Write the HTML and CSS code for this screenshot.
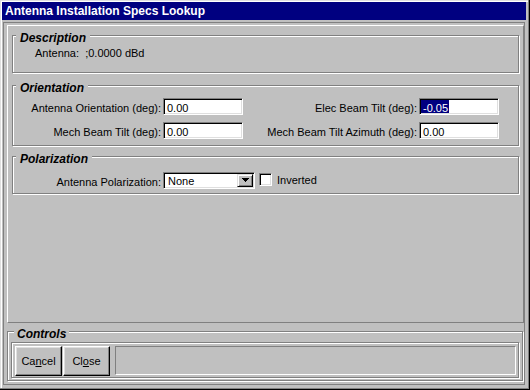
FILE: index.html
```html
<!DOCTYPE html>
<html lang="en">
<head>
  <meta charset="UTF-8" />
  <title>Antenna Installation Specs Lookup</title>
  <link rel="stylesheet" href="styles.css">
</head>
<body>
  <div class="window">
    <div class="titlebar">Antenna Installation Specs Lookup</div>
    <div class="client">
      <!-- Panel principal con los grupos -->
      <div class="main-panel">
        <fieldset class="group group-desc">
          <legend>Description</legend>
          <div class="desc">Antenna:  ;0.0000 dBd</div>
        </fieldset>

        <fieldset class="group group-orient">
          <legend>Orientation</legend>
          <div class="orient-grid">
            <span class="lbl">Antenna Orientation (deg):</span>
            <div class="edit"><span class="val">0.00</span></div>
            <span class="lbl">Elec Beam Tilt (deg):</span>
            <div class="edit"><span class="val selected">-0.05</span></div>
            <span class="lbl">Mech Beam Tilt (deg):</span>
            <div class="edit"><span class="val">0.00</span></div>
            <span class="lbl">Mech Beam Tilt Azimuth (deg):</span>
            <div class="edit"><span class="val">0.00</span></div>
          </div>
        </fieldset>

        <fieldset class="group group-pol">
          <legend>Polarization</legend>
          <div class="pol-row">
            <span class="lbl">Antenna Polarization:</span>
            <div class="edit combo">
              <span class="val">None</span>
              <span class="combo-btn">
                <svg width="7" height="4" viewBox="0 0 7 4"><path d="M0 0h7v1h-1v1h-1v1h-1v1h-1v-1h-1v-1h-1v-1h-1z" fill="#000"/></svg>
              </span>
            </div>
            <span class="check"></span>
            <span class="check-label">Inverted</span>
          </div>
        </fieldset>
      </div>

      <!-- Controles inferiores -->
      <fieldset class="group controls">
        <legend>Controls</legend>
        <div class="button-bar">
          <button class="btn">Ca<u>n</u>cel</button>
          <button class="btn">Cl<u>o</u>se</button>
          <div class="status"></div>
        </div>
      </fieldset>
    </div>
  </div>
</body>
</html>
```

FILE: styles.css
```css
/* Reset básico */
* {
  margin: 0;
  padding: 0;
  box-sizing: border-box;
}
body {
  background: #c0c0c0;
  font-family: "Liberation Sans", Arial, sans-serif;
  font-size: 11px;
  color: #000;
}
/* Ventana con borde estilo Win95 */
.window {
  width: 530px;
  height: 390px;
  padding: 2px 4px 4px 2px;
  display: flex;
  flex-direction: column;
  background: #c0c0c0;
  box-shadow: inset -1px -1px #000, inset -2px -2px #808080, inset 1px 1px #dfdfdf, inset 2px 2px #fff;
}
.titlebar {
  flex: none;
  height: 18px;
  line-height: 18px;
  padding-left: 3px;
  background: #000080;
  color: #fff;
  font-weight: bold;
  font-size: 12px;
  white-space: nowrap;
}
.client {
  flex: 1;
  margin: 2px 1px 1px 1px;
  border: 1px solid #808080;
  padding: 2px 0 2px 3px;
  display: flex;
  flex-direction: column;
}
.main-panel {
  flex: 1;
  border: 1px solid;
  border-color: #fff #808080 #808080 #fff;
  padding: 0 4px;
}
/* Group boxes grabados */
.group {
  border: 1px solid #808080;
  box-shadow: 1px 1px 0 #fff, inset 1px 1px 0 #fff;
  min-width: 0;
}
.group legend {
  font: italic bold 12px/12px "Liberation Sans", Arial, sans-serif;
  padding: 6px 4px 0 4px;
  margin-left: 3px;
  background: #c0c0c0;
}
.group-orient {
  margin-top: 3px;
}
.group-pol {
  margin-top: 1px;
}
.desc {
  padding: 2px 0 12px 22px;
  line-height: 14px;
  white-space: pre;
}
.orient-grid {
  display: grid;
  grid-template-columns: 148px 80px 172px 80px;
  grid-auto-rows: 17px;
  column-gap: 2px;
  row-gap: 7px;
  padding: 4px 0 6px 0;
}
.lbl {
  text-align: right;
  line-height: 13px;
  padding-top: 4px;
  white-space: nowrap;
}
/* Cajas de texto hundidas */
.edit {
  height: 17px;
  background: #fff;
  border: 1px solid;
  border-color: #808080 #fff #fff #808080;
  box-shadow: inset 1px 1px #000, inset -1px -1px #dfdfdf;
  padding: 1px 0 0 1px;
  line-height: 13px;
  overflow: hidden;
  white-space: nowrap;
}
.val {
  display: inline-block;
  vertical-align: top;
  height: 13px;
  padding: 2px 1px 0 2px;
  line-height: 13px;
}
.selected {
  background: #000080;
  color: #fff;
}
.pol-row {
  display: flex;
  align-items: flex-start;
  height: 17px;
  margin: 7px 0 4px 0;
}
.pol-row .lbl {
  width: 148px;
  margin-right: 2px;
}
.combo {
  width: 92px;
  display: flex;
  padding: 1px;
}
.combo .val {
  flex: 1;
  padding: 1px 0 0 3px;
}
.combo-btn {
  width: 16px;
  height: 13px;
  display: flex;
  align-items: center;
  justify-content: center;
  padding-bottom: 2px;
  background: #c0c0c0;
  border: 1px solid;
  border-color: #dfdfdf #000 #000 #dfdfdf;
  box-shadow: inset 1px 1px #fff, inset -1px -1px #808080;
}
.combo-btn svg {
  display: block;
}
.check {
  width: 13px;
  height: 13px;
  margin: 1px 0 0 4px;
  background: #fff;
  border: 1px solid;
  border-color: #808080 #fff #fff #808080;
  box-shadow: inset 1px 1px #000, inset -1px -1px #dfdfdf;
}
.check-label {
  margin-left: 5px;
  line-height: 13px;
  padding-top: 2px;
}
/* Grupo de controles */
.controls {
  flex: none;
  margin: 0 1px 1px 0;
}
.controls legend {
  padding: 5px 3px 0 3px;
  margin-left: 6px;
}
.button-bar {
  display: flex;
  align-items: flex-start;
  height: 36px;
  margin: 2px 3px 2px 3px;
  padding: 3px 2px 0 3px;
  border: 1px solid #808080;
  box-shadow: 1px 1px 0 #fff, inset 1px 1px 0 #fff;
}
.btn {
  width: 47px;
  height: 30px;
  margin-right: 1px;
  font-family: "Liberation Sans", Arial, sans-serif;
  font-size: 11px;
  color: #000;
  background: #c0c0c0;
  border: 1px solid;
  border-color: #fff #000 #000 #fff;
  box-shadow: inset -1px -1px #808080, inset 1px 1px #dfdfdf;
}
.status {
  flex: 1;
  height: 29px;
  margin-left: 4px;
  border: 1px solid;
  border-color: #808080 #fff #fff #808080;
}
```
